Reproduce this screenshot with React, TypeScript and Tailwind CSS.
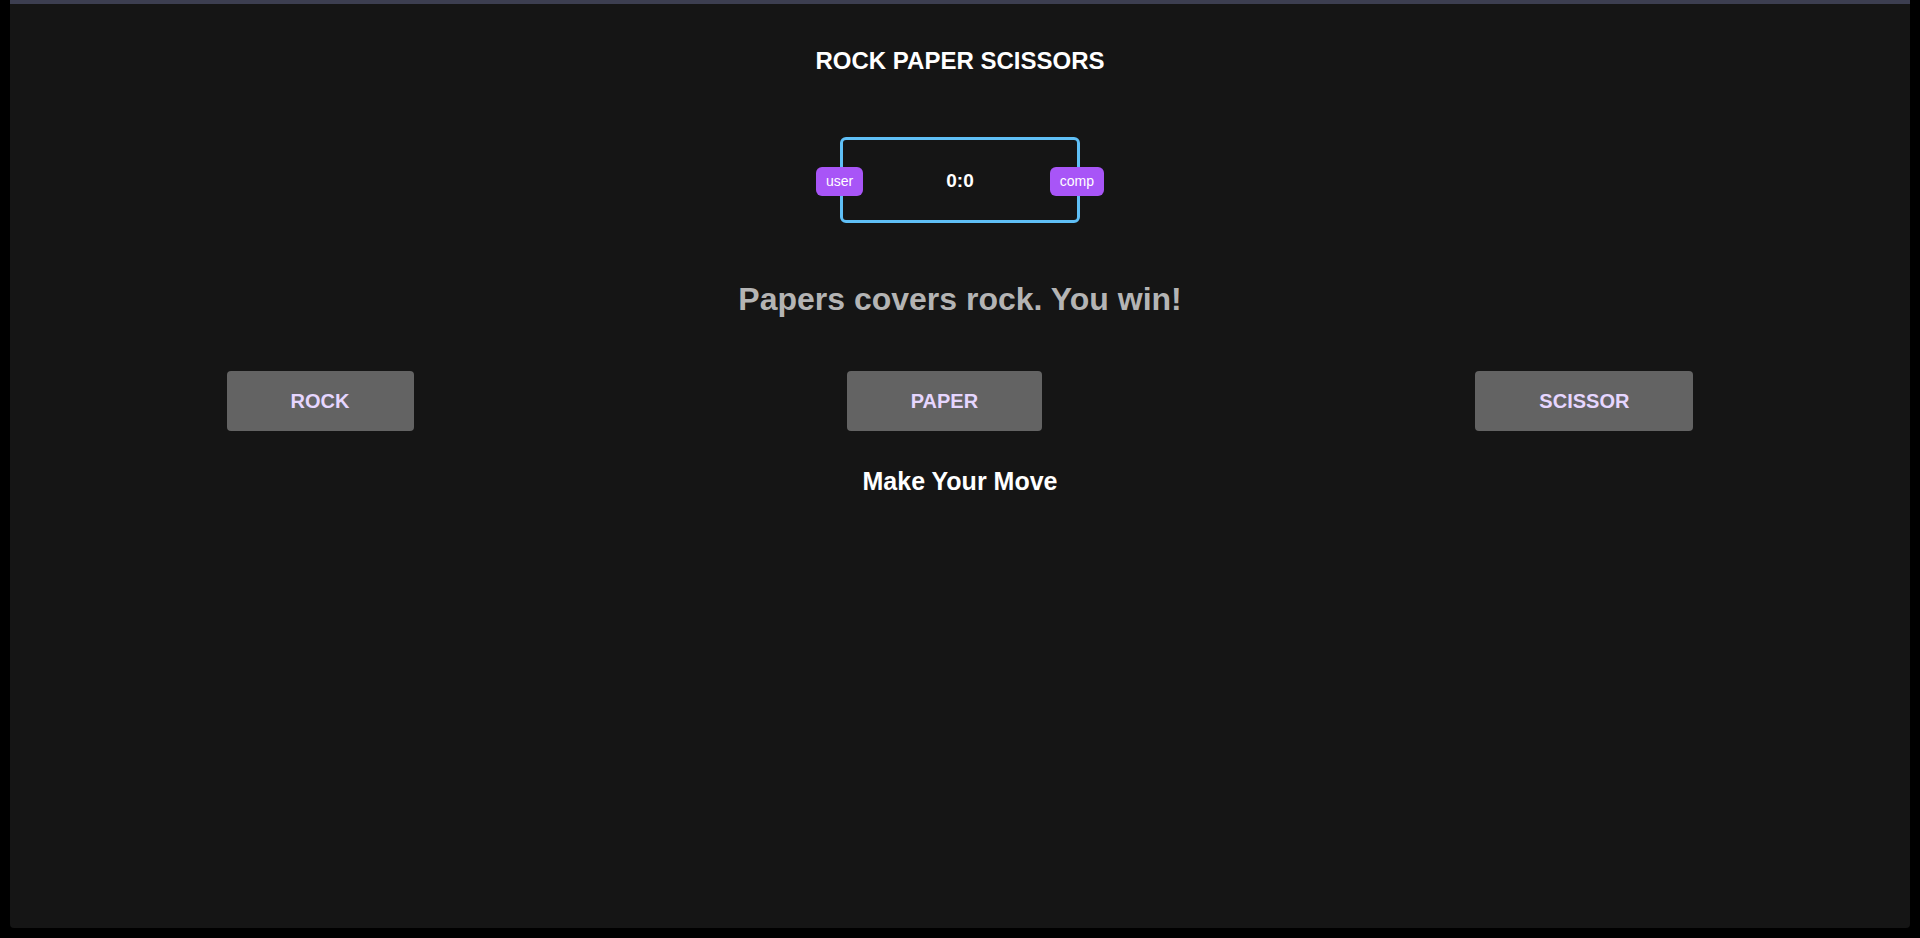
import React from "react";

const moves = ["ROCK", "PAPER", "SCISSOR"];

export default function App() {
  const [score] = React.useState({ user: 0, comp: 0 });
  const [message] = React.useState("Papers covers rock. You win!");

  return (
    <div className="min-h-screen w-full bg-black px-[10px] pb-[10px] font-['Liberation_Sans',Arial,sans-serif]">
      <div className="flex h-[928px] flex-col items-center border-t-4 border-[#3c3e50] bg-[#151515] rounded-b-[4px]">
        <h1 className="mt-[41px] text-[24px] leading-[32px] font-bold text-white">
          ROCK PAPER SCISSORS
        </h1>

        <div className="relative mt-[60px] flex h-[86px] w-[240px] items-center justify-center rounded-[6px] border-[3px] border-[#5fbff6]">
          <span className="absolute left-[-27px] top-[27px] flex h-[29px] items-center rounded-[6px] bg-[#a855f7] px-[10px] text-[14px] text-white">
            user
          </span>
          <span className="pt-[2px] text-[19px] font-bold text-white">
            {score.user}:{score.comp}
          </span>
          <span className="absolute right-[-27px] top-[27px] flex h-[29px] items-center rounded-[6px] bg-[#a855f7] px-[10px] text-[14px] text-white">
            comp
          </span>
        </div>

        <p className="mt-[56px] text-[32px] leading-[40px] font-bold text-[#b4b4b4]">{message}</p>

        <div className="mt-[52px] flex w-full flex-row justify-around">
          {moves.map((move) => (
            <button
              key={move}
              className="h-[60px] rounded-[4px] bg-[#636363] px-16 text-[20px] font-bold text-[#e6d6ff]"
            >
              {move}
            </button>
          ))}
        </div>

        <h2 className="mt-[34px] text-[25px] leading-[32px] font-bold text-white">Make Your Move</h2>
      </div>
    </div>
  );
}
